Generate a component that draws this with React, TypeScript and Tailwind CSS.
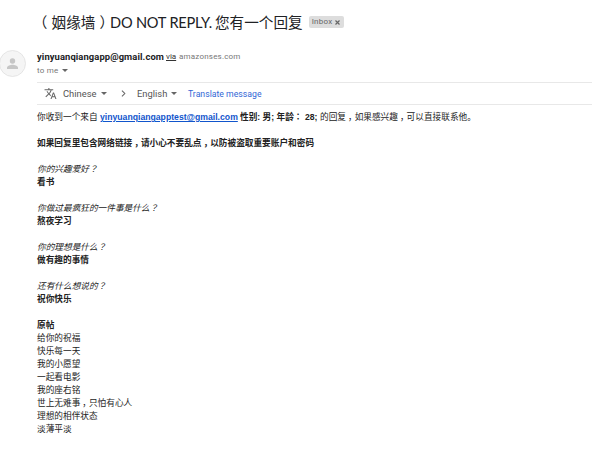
import React from "react";

// Punctuation that sits in the middle of its full-width cell.
const Mid = ({ children }: { children: React.ReactNode }) => (
  <span lang="zh-TW" className="font-['Liberation_Sans','Noto_Sans_CJK_TC',sans-serif]">{children}</span>
);

// A half-width comma glyph centred in a full-width cell.
const Comma = () => <span className="inline-block w-[1em] pl-[2px] [font-feature-settings:'halt']">，</span>;

const Caret = ({ className = "" }: { className?: string }) => (
  <svg viewBox="0 0 6 3" className={`h-[3px] w-[6px] shrink-0 ${className}`} fill="#666">
    <path d="M0 0h6L3 3z" />
  </svg>
);

const answers = [
  ["你的兴趣爱好", "看书"],
  ["你做过最疯狂的一件事是什么", "熬夜学习"],
  ["你的理想是什么", "做有趣的事情"],
  ["还有什么想说的", "祝你快乐"],
];

const post = ["给你的祝福", "快乐每一天", "我的小愿望", "一起看电影", "我的座右铭"];
const postEnd = ["理想的相伴状态", "淡薄平淡"];

export default function App() {
  return (
    <main lang="zh-CN" className="h-[452px] w-[592px] overflow-hidden whitespace-nowrap bg-white font-['Liberation_Sans','Noto_Sans_CJK_SC',sans-serif] text-[#222]">
      <header className="flex h-[44px] items-center pl-[37px]">
        <h1 className="flex h-[20px] items-center pt-[2px] text-[14.6px] leading-[20px] text-[#202124] font-['Lato','Noto_Sans_CJK_SC',sans-serif]">
          <span className="w-[73px]">
            <span className="inline-block w-[1em] pl-[3px] [font-feature-settings:'halt']">（</span>姻缘墙<span className="inline-block w-[1em] pl-[4px] [font-feature-settings:'halt']">）</span>
          </span>
          <span className="w-[105px] tracking-[-0.2px]">DO NOT REPLY.</span>
          <span>您有一个回复</span>
        </h1>
        <span className="ml-[6px] flex h-[12px] w-[35px] items-center justify-center gap-[3px] rounded-[2px] bg-[#ddd] font-['Roboto',sans-serif] text-[8px] tracking-[0.25px] text-[#666]">
          Inbox
          <svg viewBox="0 0 5 5" className="h-[5px] w-[5px]" stroke="#666" strokeWidth="1.2"><path d="M.5.5l4 4M4.5.5l-4 4" /></svg>
        </span>
      </header>

      <section className="flex h-[38px] pt-[6px]">
        <svg viewBox="0 0 27 27" className="-ml-px h-[27px] w-[27px] shrink-0">
          <circle cx="13.5" cy="13.5" r="13" fill="#f5f5f5" stroke="#ddd" strokeWidth=".7" />
          <circle cx="13.5" cy="11" r="2.7" fill="#c6c6c6" />
          <path d="M8 19v-1.2c0-2 3.5-3 5.5-3s5.5 1 5.5 3V19z" fill="#c6c6c6" />
        </svg>
        <div className="ml-[11px]">
          <div className="flex h-[13px] items-center">
            <strong className="w-[129px] font-['Roboto',sans-serif] text-[9.4px] leading-[13px] tracking-[0.1px] text-[#202124]">yinyuanqiangapp@gmail.com</strong>
            <span className="w-[13px] font-['Roboto',sans-serif] text-[8px] text-[#333] underline">via</span>
            <span className="font-['Roboto',sans-serif] text-[8px] tracking-[0.2px] text-[#777]">amazonses.com</span>
          </div>
          <div className="flex h-[14px] items-center pt-px font-['Roboto',sans-serif] text-[8px] tracking-[0.2px] text-[#777]">to me<Caret className="ml-[4px] -mt-px" /></div>
        </div>
      </section>

      <section className="ml-[37px] flex h-[23px] items-center border-y border-[#e8e8e8] font-['Roboto',sans-serif] text-[9.4px] text-[#555]">
        <svg viewBox="0 0 24 24" className="ml-[7px] h-[13px] w-[13px]" fill="#666">
          <path d="M12.87 15.07l-2.54-2.51.03-.03A17.52 17.52 0 0 0 14.07 6H17V4h-7V2H8v2H1v2h11.17A15.7 15.7 0 0 1 9 11.35 15.6 15.6 0 0 1 6.69 8h-2a17.6 17.6 0 0 0 2.98 4.56l-5.09 5.02L4 19l5-5 3.11 3.11zM18.5 10h-2L12 22h2l1.12-3h4.75L21 22h2zm-2.62 7l1.62-4.33L19.12 17z" />
        </svg>
        <span className="ml-[6px] w-[38px] pt-px">Chinese</span><Caret />
        <svg viewBox="0 0 5 8" className="ml-[14px] h-[7px] w-[5px]" fill="none" stroke="#666" strokeWidth="1.2"><path d="M.7.7L4 4 .7 7.3" /></svg>
        <span className="ml-[11px] w-[34px] pt-px">English</span><Caret />
        <span className="ml-[11px] pt-[2px] text-[8.7px] text-[#3367d6]">Translate message</span>
      </section>

      <article className="ml-[37px] pt-[6px] text-[8.66px] leading-[13px]">
        <p className="flex h-[13px]">
          <span className="w-[63px]">你收到一个来自</span>
          <a className="w-[140px] font-bold text-[#15c] underline">yinyuanqiangapptest@gmail.com</a>
          <strong className="w-[80px]">性别: 男; 年龄<Mid>：</Mid> 28;</strong>
          <span>的回复<Comma />如果感兴趣<Comma />可以直接联系他。</span>
        </p>
        <p className="mt-[13px] h-[13px] font-bold">如果回复里包含网络链接<Comma />请小心不要乱点<Comma />以防被盗取重要账户和密码</p>
        {answers.map(([question, answer]) => (
          <div className="mt-[13px]" key={question}>
            <p className="h-[13px] italic">{question}<Mid>？</Mid></p>
            <p className="h-[13px] font-bold">{answer}</p>
          </div>
        ))}
        <div className="mt-[13px]">
          <p className="h-[13px] font-bold">原帖</p>
          {post.map((line) => <p className="h-[13px]" key={line}>{line}</p>)}
          <p className="h-[13px]">世上无难事<Comma />只怕有心人</p>
          {postEnd.map((line) => <p className="h-[13px]" key={line}>{line}</p>)}
        </div>
      </article>
    </main>
  );
}
